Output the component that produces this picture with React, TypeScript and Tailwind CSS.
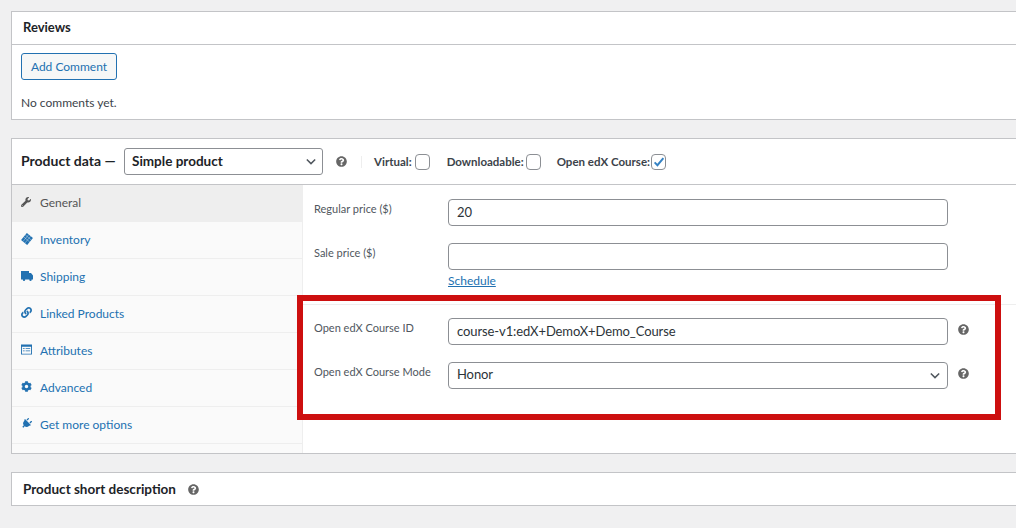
import { FaWrench, FaLink, FaCog, FaPlug, FaQuestionCircle } from "react-icons/fa";

function Help({ className = "" }: { className?: string }) {
  return <FaQuestionCircle className={"text-[11px] text-[#666] shrink-0 " + className} />;
}

function TagIcon() {
  return (
    <svg viewBox="0 0 12 12" className="w-[12px] h-[12px]">
      <g transform="rotate(40 6 6)">
        <rect x="2" y="1.5" width="8" height="9" fill="currentColor" />
        <path d="M2 4h8M2 6.5h8M4.5 1.5v9M7 1.5v9" stroke="#ffffff" strokeOpacity="0.55" strokeWidth="0.6" />
      </g>
    </svg>
  );
}

function TruckIcon() {
  return (
    <svg viewBox="0 0 12 10" className="w-[12px] h-[10px]" fill="currentColor">
      <path d="M0 0h8v2h2l2 2.5V8.5H0z" />
      <circle cx="3" cy="8.7" r="1.2" />
      <circle cx="9.5" cy="8.7" r="1.2" />
    </svg>
  );
}

function AttributesIcon() {
  return (
    <svg viewBox="0 0 12 12" className="w-[11px] h-[11px]" fill="currentColor">
      <path fillRule="evenodd" d="M0 0.5h12v11H0zM1 3v7.5h10V3zM2 4.5h2v1H2zM5 4.5h5v1H5zM2 7h2v1H2zM5 7h5v1H5z" />
    </svg>
  );
}

function Chevron({ className = "" }: { className?: string }) {
  return (
    <svg viewBox="0 0 12 8" className={"absolute w-[10px] h-[7px] pointer-events-none " + className} fill="none" stroke="#50575e" strokeWidth="1.8">
      <path d="M1 1.5l5 5 5-5" />
    </svg>
  );
}

function CheckBox({ checked = false }: { checked?: boolean }) {
  return (
    <span className="relative w-[15px] h-[16px] rounded-[4px] border border-[#8c8f94] bg-white shrink-0">
      {checked && (
        <svg viewBox="0 0 16 16" className="absolute left-[0px] top-[0px] w-[14px] h-[14px]" fill="none" stroke="#3582c4" strokeWidth="2.2">
          <path d="M3 8.5l3.2 3.2L13 3.5" />
        </svg>
      )}
    </span>
  );
}

const tabs = [
  { label: "General", icon: <FaWrench className="text-[10px]" />, active: true },
  { label: "Inventory", icon: <TagIcon /> },
  { label: "Shipping", icon: <TruckIcon /> },
  { label: "Linked Products", icon: <FaLink className="text-[11px]" /> },
  { label: "Attributes", icon: <AttributesIcon /> },
  { label: "Advanced", icon: <FaCog className="text-[11px]" /> },
  { label: "Get more options", icon: <FaPlug className="text-[11px] rotate-45" /> },
];

const inputCls =
  "w-[500px] h-[27px] rounded-[4px] border border-[#8c8f94] bg-white px-[8px] pb-[1px] text-[13px] tracking-[-0.1px] text-[#2c3338] outline-none";

function FieldLabel({ children }: { children: string }) {
  return <label className="w-[134px] shrink-0 pt-[1px] text-[11px] leading-[18px] text-[#50575e]">{children}</label>;
}

export default function App() {
  return (
    <div
      className="w-[1016px] h-[528px] overflow-hidden relative bg-[#f0f0f1] pt-[11px] pl-[11px]"
      style={{ fontFamily: "Lato, sans-serif" }}
    >
      {/* Reviews */}
      <div className="w-[1020px] h-[109px] border border-[#c3c4c7] bg-white">
        <div className="h-[33px] border-b border-[#c3c4c7] pl-[11px] flex items-center text-[13px] font-bold text-[#1d2327]">
          Reviews
        </div>
        <div className="pl-[9px] pt-[8px]">
          <button className="block h-[27px] w-[96px] rounded-[3px] border border-[#2271b1] bg-[#f6f7f7] text-[12px] text-[#2271b1]">
            Add Comment
          </button>
          <p className="mt-[14px] text-[12px] leading-[18px] text-[#3c434a]">No comments yet.</p>
        </div>
      </div>

      {/* Product data */}
      <div className="mt-[18px] w-[1020px] h-[316px] border border-[#c3c4c7] bg-white">
        <div className="h-[46px] border-b border-[#c3c4c7] flex items-center pl-[9px]">
          <span className="w-[103px] text-[14px] font-bold text-[#1d2327] -mt-[2px]">Product data —</span>
          <div className="relative flex items-center">
            <select className="appearance-none w-[199px] h-[27px] rounded-[3px] border border-[#8c8f94] bg-white pl-[7px] text-[13.5px] font-bold text-[#1d2327] outline-none">
              <option>Simple product</option>
            </select>
            <Chevron className="right-[7px]" />
          </div>
          <Help className="ml-[13px]" />
          <span className="ml-[14px] h-[12px] w-px bg-[#eeeeee]" />
          <span className="ml-[12px] flex items-center text-[11.5px] font-bold text-[#3c434a]">
            Virtual:<span className="w-[3px]" />
            <CheckBox />
          </span>
          <span className="ml-[17px] flex items-center text-[11.5px] font-bold text-[#3c434a]">
            Downloadable:<span className="w-[2px]" />
            <CheckBox />
          </span>
          <span className="ml-[16px] flex items-center text-[11.5px] font-bold text-[#3c434a]">
            Open edX Course:<span className="w-[1px]" />
            <CheckBox checked />
          </span>
        </div>

        <div className="flex h-[268px]">
          <ul className="w-[291px] shrink-0 bg-[#fafafa] border-r border-[#eeeeee]">
            {tabs.map((t) => (
              <li
                key={t.label}
                className={
                  "h-[37px] flex items-center border-b " +
                  (t.active ? "bg-[#eeeeee] border-[#eeeeee] text-[#555555]" : "border-[#eeeeee] text-[#2271b1]")
                }
              >
                <span className="w-[28px] pl-[9px] flex justify-start -mt-[3px]">{t.icon}</span>
                <span className="text-[12px]">{t.label}</span>
              </li>
            ))}
          </ul>

          <div className="flex-1">
            <div className="h-[120px] border-b border-[#eeeeee] pl-[11px] pt-[14px]">
              <div className="flex">
                <FieldLabel>Regular price ($)</FieldLabel>
                <input className={inputCls} defaultValue="20" readOnly />
              </div>
              <div className="flex mt-[17px]">
                <FieldLabel>Sale price ($)</FieldLabel>
                <input className={inputCls} readOnly />
              </div>
              <a className="ml-[134px] mt-[2px] block text-[12px] leading-[18px] text-[#2271b1] underline">Schedule</a>
            </div>
            <div className="pl-[11px] pt-[13px]">
              <div className="flex items-start">
                <FieldLabel>Open edX Course ID</FieldLabel>
                <input className={inputCls} defaultValue="course-v1:edX+DemoX+Demo_Course" readOnly />
                <Help className="ml-[10px] mt-[6px]" />
              </div>
              <div className="flex items-start mt-[17px]">
                <FieldLabel>Open edX Course Mode</FieldLabel>
                <div className="relative flex items-center">
                  <select className={"appearance-none " + inputCls}>
                    <option>Honor</option>
                  </select>
                  <Chevron className="right-[8px]" />
                </div>
                <Help className="ml-[10px] mt-[6px]" />
              </div>
            </div>
          </div>
        </div>
      </div>

      {/* Short description */}
      <div className="mt-[18px] w-[1020px] h-[34px] border border-[#c3c4c7] bg-white pl-[11px] flex items-center text-[13.5px] font-bold text-[#1d2327]">
        Product short description
        <Help className="ml-[12px]" />
      </div>

      {/* red highlight drawn over the course fields */}
      <div className="absolute left-[297px] top-[295px] w-[704px] h-[125px] border-[6px] border-[#cd0f0f] pointer-events-none" />
    </div>
  );
}
